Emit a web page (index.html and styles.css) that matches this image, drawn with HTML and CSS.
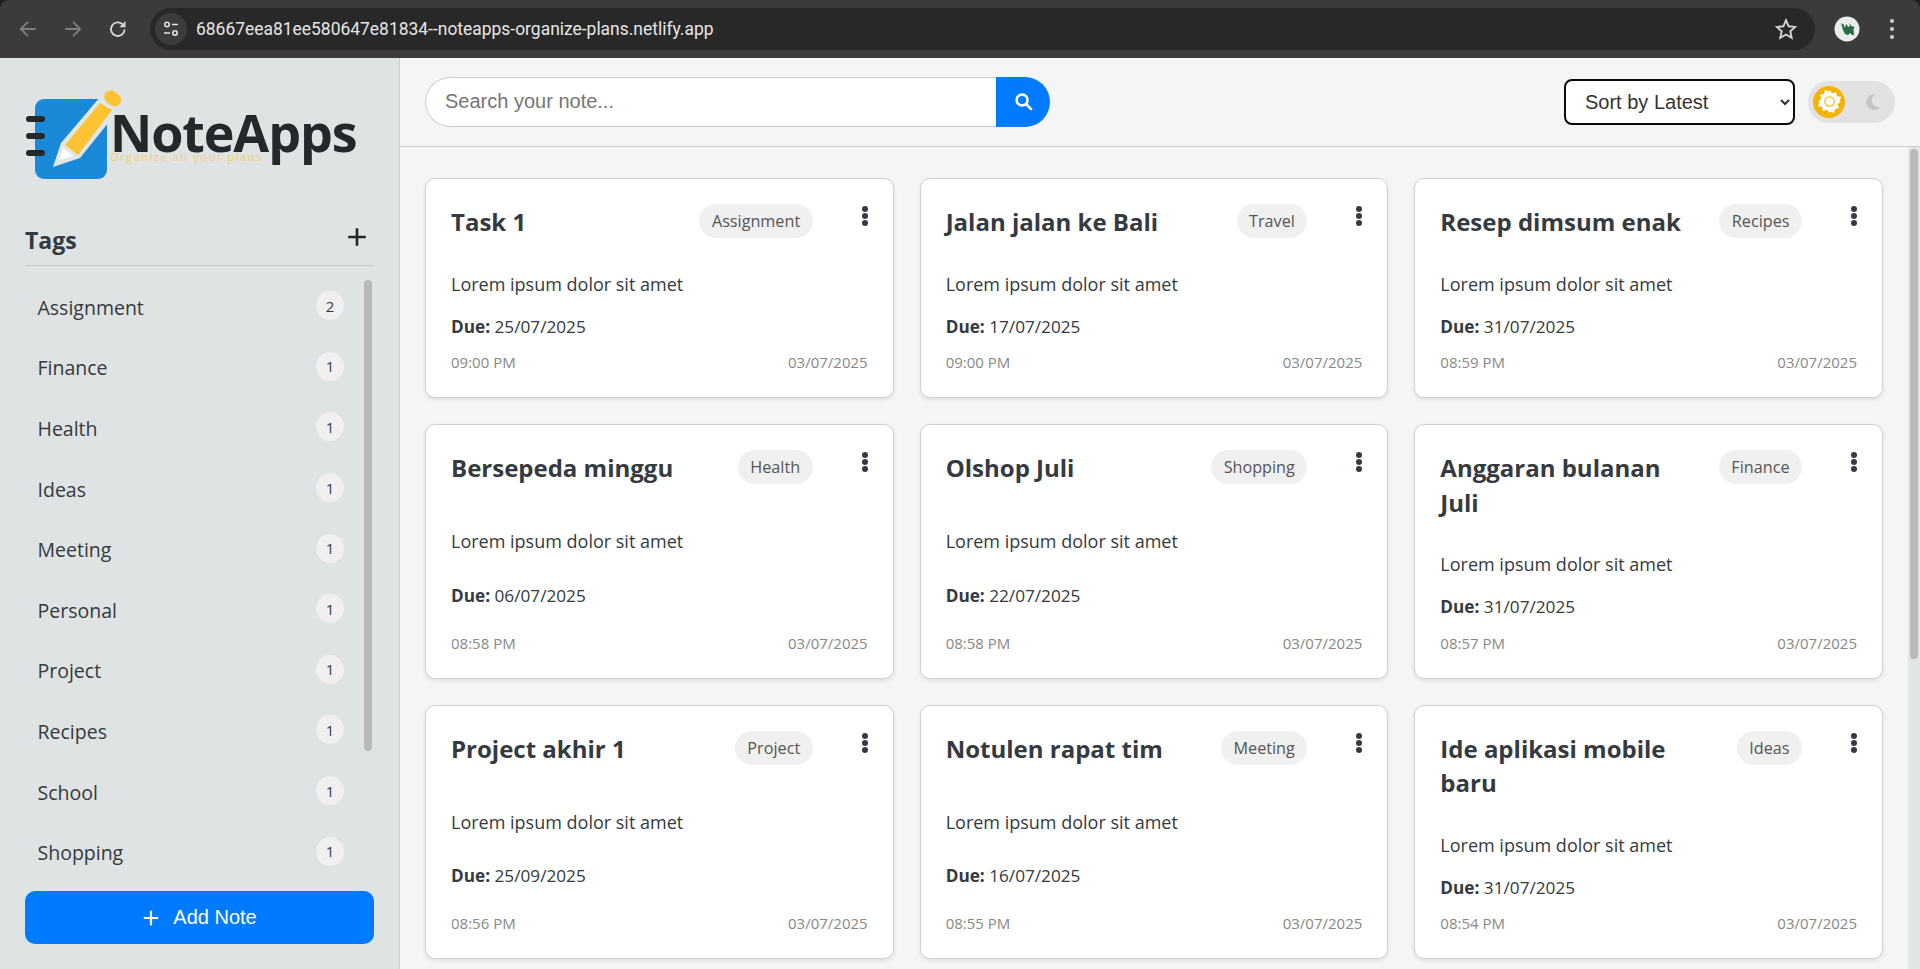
FILE: index.html
```html
<!DOCTYPE html>
<html lang="en">
<head>
<meta charset="utf-8">
<title>NoteApps</title>
<link rel="stylesheet" href="styles.css">
</head>
<body>
<header class="browser">
  <div class="nav-icons">
    <svg class="nav-icon dim" viewBox="0 0 20 20"><path d="M17 10H4M10 3.5 3.5 10l6.5 6.5"/></svg>
    <svg class="nav-icon dim" viewBox="0 0 20 20"><path d="M3 10h13M10 3.5l6.5 6.5-6.5 6.5"/></svg>
    <svg class="nav-icon" viewBox="0 0 20 20"><path d="M16 10.5a6.2 6.2 0 1 1-1.8-4.7L16 7.5"/><path class="solid" d="M16.8 2.8v5.6h-5.6z"/></svg>
  </div>
  <div class="omnibox">
    <span class="site-chip">
      <svg viewBox="0 0 20 20"><circle cx="6" cy="5.5" r="2.2"/><path d="M11 5.5h6M3 14h6"/><circle cx="14" cy="14" r="2.2"/></svg>
    </span>
    <span class="url">68667eea81ee580647e81834--noteapps-organize-plans.netlify.app</span>
    <svg class="star" viewBox="0 0 20 20"><path d="m10 2 2.4 5.5 6 .6-4.5 4 1.3 5.9-5.2-3-5.2 3 1.3-5.9-4.5-4 6-.6z"/></svg>
  </div>
  <div class="avatar">
    <svg viewBox="0 0 26 26"><circle cx="13" cy="13" r="12.5" fill="#e9eeea"/><path d="M7 7l3 2 .5 3 2-4 1.5 3 2-1-.5-3 2 3 3 1-1 3 .5 5h-2l-2-2-2 2-3-1-2-4z" fill="#2a6b44"/></svg>
  </div>
  <div class="kebab"><i></i><i></i><i></i></div>
</header>

<div class="app">
  <aside class="sidebar">
    <svg class="logo" viewBox="0 0 349 110">
      <rect x="10" y="20" width="72" height="80" rx="9" fill="#1a8ad8"/>
      <path d="M4 40h13M4 57h13M4 74h13" stroke="#24282b" stroke-width="6" stroke-linecap="round"/>
      <path d="M28 88l8-24 39-46 17 15-37 46z" fill="#e3e6e6"/>
      <path d="M34 81l4-12 10 8z" fill="#fff"/>
      <path d="M40 66l13 10 34-45-12-7z" fill="#fec233"/>
      <rect x="79" y="13" width="18" height="13" rx="6.5" fill="#fec233" transform="rotate(38.5 88 19)"/>
      <text class="logo-name" x="85" y="73">NoteApps</text>
      <text class="logo-tag" x="85" y="82">Organize all your plans</text>
    </svg>

    <div class="tags-head">
      <h2>Tags</h2>
      <svg class="plus" viewBox="0 0 20 20"><path d="M10 2v16M2 10h16"/></svg>
    </div>

    <div class="tag-pane">
      <ul class="tag-list">
        <li class="tag-row"><span>Assignment</span><b>2</b></li>
        <li class="tag-row"><span>Finance</span><b>1</b></li>
        <li class="tag-row"><span>Health</span><b>1</b></li>
        <li class="tag-row"><span>Ideas</span><b>1</b></li>
        <li class="tag-row"><span>Meeting</span><b>1</b></li>
        <li class="tag-row"><span>Personal</span><b>1</b></li>
        <li class="tag-row"><span>Project</span><b>1</b></li>
        <li class="tag-row"><span>Recipes</span><b>1</b></li>
        <li class="tag-row"><span>School</span><b>1</b></li>
        <li class="tag-row"><span>Shopping</span><b>1</b></li>
      </ul>
      <span class="tag-thumb"></span>
    </div>

    <button class="add-note" type="button">
      <svg viewBox="0 0 20 20"><path d="M10 2v16M2 10h16"/></svg>
      Add Note
    </button>
  </aside>

  <main class="content">
    <div class="toolbar">
      <form class="search">
        <input type="text" placeholder="Search your note...">
        <button type="button" aria-label="Search">
          <svg viewBox="0 0 20 20"><circle cx="8.5" cy="8.5" r="5.7"/><path d="m13 13 5 5"/></svg>
        </button>
      </form>
      <div class="toolbar-right">
        <select class="sort"><option>Sort by Latest</option><option>Sort by Oldest</option></select>
        <div class="theme-toggle">
          <span class="knob">
            <svg viewBox="0 0 24 24">
              <path fill="#fff" d="m12 1 2.6 3.2 3.9-1.3.6 4 4 .6-1.3 3.9L23 12l-3.2 2.6 1.3 3.9-4 .6-.6 4-3.9-1.3L12 23l-2.6-3.2-3.9 1.3-.6-4-4-.6 1.3-3.9L1 12l3.2-2.6-1.3-3.9 4-.6.6-4 3.9 1.3z"/>
              <circle cx="12" cy="12" r="5" fill="#f5b301"/>
              <circle cx="12" cy="12" r="4" fill="#fff"/>
            </svg>
          </span>
          <svg class="moon" viewBox="0 0 20 20"><path d="M13 1.5A8.7 8.7 0 1 0 18.5 15 7.2 7.2 0 0 1 13 1.5z"/></svg>
        </div>
      </div>
    </div>

    <div class="notes-pane">
      <section class="notes">
        <article class="card">
          <div class="card-head"><h3>Task 1</h3><span class="chip">Assignment</span><span class="dots"><i></i><i></i><i></i></span></div>
          <p class="body">Lorem ipsum dolor sit amet</p>
          <p class="due"><strong>Due:</strong> 25/07/2025</p>
          <div class="meta"><span>09:00 PM</span><span>03/07/2025</span></div>
        </article>
        <article class="card">
          <div class="card-head"><h3>Jalan jalan ke Bali</h3><span class="chip">Travel</span><span class="dots"><i></i><i></i><i></i></span></div>
          <p class="body">Lorem ipsum dolor sit amet</p>
          <p class="due"><strong>Due:</strong> 17/07/2025</p>
          <div class="meta"><span>09:00 PM</span><span>03/07/2025</span></div>
        </article>
        <article class="card">
          <div class="card-head"><h3>Resep dimsum enak</h3><span class="chip">Recipes</span><span class="dots"><i></i><i></i><i></i></span></div>
          <p class="body">Lorem ipsum dolor sit amet</p>
          <p class="due"><strong>Due:</strong> 31/07/2025</p>
          <div class="meta"><span>08:59 PM</span><span>03/07/2025</span></div>
        </article>
        <article class="card">
          <div class="card-head"><h3>Bersepeda minggu</h3><span class="chip">Health</span><span class="dots"><i></i><i></i><i></i></span></div>
          <p class="body">Lorem ipsum dolor sit amet</p>
          <p class="due"><strong>Due:</strong> 06/07/2025</p>
          <div class="meta"><span>08:58 PM</span><span>03/07/2025</span></div>
        </article>
        <article class="card">
          <div class="card-head"><h3>Olshop Juli</h3><span class="chip">Shopping</span><span class="dots"><i></i><i></i><i></i></span></div>
          <p class="body">Lorem ipsum dolor sit amet</p>
          <p class="due"><strong>Due:</strong> 22/07/2025</p>
          <div class="meta"><span>08:58 PM</span><span>03/07/2025</span></div>
        </article>
        <article class="card">
          <div class="card-head"><h3>Anggaran bulanan Juli</h3><span class="chip">Finance</span><span class="dots"><i></i><i></i><i></i></span></div>
          <p class="body">Lorem ipsum dolor sit amet</p>
          <p class="due"><strong>Due:</strong> 31/07/2025</p>
          <div class="meta"><span>08:57 PM</span><span>03/07/2025</span></div>
        </article>
        <article class="card">
          <div class="card-head"><h3>Project akhir 1</h3><span class="chip">Project</span><span class="dots"><i></i><i></i><i></i></span></div>
          <p class="body">Lorem ipsum dolor sit amet</p>
          <p class="due"><strong>Due:</strong> 25/09/2025</p>
          <div class="meta"><span>08:56 PM</span><span>03/07/2025</span></div>
        </article>
        <article class="card">
          <div class="card-head"><h3>Notulen rapat tim</h3><span class="chip">Meeting</span><span class="dots"><i></i><i></i><i></i></span></div>
          <p class="body">Lorem ipsum dolor sit amet</p>
          <p class="due"><strong>Due:</strong> 16/07/2025</p>
          <div class="meta"><span>08:55 PM</span><span>03/07/2025</span></div>
        </article>
        <article class="card">
          <div class="card-head"><h3>Ide aplikasi mobile baru</h3><span class="chip">Ideas</span><span class="dots"><i></i><i></i><i></i></span></div>
          <p class="body">Lorem ipsum dolor sit amet</p>
          <p class="due"><strong>Due:</strong> 31/07/2025</p>
          <div class="meta"><span>08:54 PM</span><span>03/07/2025</span></div>
        </article>
      </section>
      <span class="notes-track"><span class="notes-thumb"></span></span>
    </div>
  </main>
</div>
</body>
</html>
```
FILE: styles.css
```css
* { box-sizing: border-box; }
html { height: 100%; overflow: hidden; }
body {
  margin: 0;
  height: 969px;
  overflow: hidden;
  display: flex;
  flex-direction: column;
  font-family: "Open Sans", "Noto Sans", sans-serif;
  color: #343a40;
  background: #202020;
}

/* browser frame */
.browser {
  flex: 0 0 58px;
  height: 58px;
  display: flex;
  align-items: center;
  background: #3b3b3b;
  border-radius: 9px 9px 0 0;
  padding: 0 0 0 15px;
}
.nav-icons { display: flex; gap: 23px; width: 135px; flex: none; padding-left: 2px; }
.nav-icon { width: 22px; height: 22px; fill: none; stroke: #d5d5d5; stroke-width: 1.7; }
.nav-icon.dim { stroke: #7d7d7d; }
.nav-icon .solid { fill: #d5d5d5; stroke: none; }
.omnibox {
  width: 1665px;
  flex: none;
  height: 42px;
  border-radius: 21px;
  background: #282828;
  display: flex;
  align-items: center;
  padding: 0 18px 0 5px;
}
.site-chip {
  width: 32px;
  height: 32px;
  border-radius: 50%;
  background: #3c3c3c;
  display: flex;
  align-items: center;
  justify-content: center;
  flex: none;
}
.site-chip svg { width: 20px; height: 20px; fill: none; stroke: #e3e3e3; stroke-width: 1.6; }
.url {
  margin-left: 9px;
  flex: 1;
  font-family: "Roboto", sans-serif;
  font-size: 17.45px;
  color: #e6e6e6;
}
.star { width: 22px; height: 22px; fill: none; stroke: #d5d5d5; stroke-width: 1.7; }
.avatar { margin-left: 19px; width: 26px; height: 26px; flex: none; }
.avatar svg { display: block; width: 26px; height: 26px; }
.kebab { margin-left: 30px; display: flex; flex-direction: column; gap: 4px; }
.kebab i { width: 4px; height: 4px; border-radius: 50%; background: #d5d5d5; }

.app { flex: 1; min-height: 0; display: flex; }

/* sidebar */
.sidebar {
  flex: 0 0 400px;
  width: 400px;
  background: #dfe3e3;
  border-right: 1px solid #c9cccc;
  padding: 0 25px 25px;
  display: flex;
  flex-direction: column;
}
.logo { width: 349px; height: 110px; flex: none; margin-top: 21px; display: block; overflow: visible; }
.logo-name { font-family: "Open Sans", sans-serif; font-weight: 700; font-size: 52px; letter-spacing: -1.1px; fill: #23282b; }
.logo-tag { font-family: "Open Sans", sans-serif; font-size: 11px; letter-spacing: 1.55px; fill: #f6cf72; }
.tags-head {
  margin-top: 31px;
  height: 46px;
  display: flex;
  align-items: center;
  justify-content: space-between;
  border-bottom: 1px solid #c6caca;
  padding-bottom: 5px;
  flex: none;
}
.tags-head h2 { margin: 0; font-size: 23px; font-weight: 700; color: #343a40; }
.plus { width: 22px; height: 22px; fill: none; stroke: #23282b; stroke-width: 2.4; margin-right: 6px; margin-top: -6px; }
.tag-pane {
  position: relative;
  flex: 1;
  min-height: 0;
  margin-top: 11px;
  overflow: hidden;
}
.tag-list { list-style: none; margin: 0; padding: 0; }
.tag-thumb {
  position: absolute;
  top: 3px;
  right: 2px;
  width: 8px;
  height: 471px;
  border-radius: 4px;
  background: #b9b9b9;
}
.tag-row {
  height: 60.6px;
  display: flex;
  align-items: center;
  justify-content: space-between;
  padding: 0 30px 0 12.5px;
  font-size: 19.5px;
  font-weight: 500;
}
.tag-row b {
  width: 28px;
  height: 29px;
  border-radius: 50%;
  background: #f0f0f0;
  font-size: 15px;
  font-weight: 400;
  display: flex;
  align-items: center;
  justify-content: center;
  margin-top: -3px;
}
.add-note {
  flex: none;
  margin-top: 23px;
  height: 53px;
  border: 0;
  border-radius: 10px;
  background: #007bff;
  color: #fff;
  font-family: "Liberation Sans", Arial, sans-serif;
  font-size: 20px;
  display: flex;
  align-items: center;
  justify-content: center;
  gap: 13px;
}
.add-note svg { width: 18px; height: 18px; fill: none; stroke: #fff; stroke-width: 2.4; }

/* main */
.content { flex: 1; min-width: 0; display: flex; flex-direction: column; background: #f4f6f6; }
.toolbar {
  flex: 0 0 89px;
  display: flex;
  align-items: center;
  justify-content: space-between;
  padding: 0 25px 1px;
  border-bottom: 1px solid #ccd0d0;
}
.search { display: flex; width: 625px; height: 50px; }
.search input {
  flex: 1;
  min-width: 0;
  border: 1px solid #ccc;
  border-right: 0;
  border-radius: 25px 0 0 25px;
  padding: 0 19px;
  background: #fff;
  font-family: "Liberation Sans", Arial, sans-serif;
  font-size: 20px;
  color: #333;
  outline: none;
}
.search input::placeholder { color: #757575; }
.search button {
  width: 54px;
  border: 0;
  background: #007bff;
  border-radius: 0 25px 25px 0;
  display: flex;
  align-items: center;
  justify-content: center;
}
.search svg { width: 19px; height: 19px; fill: none; stroke: #fff; stroke-width: 2.8; stroke-linecap: round; }
.toolbar-right { display: flex; align-items: center; gap: 13px; }
.sort {
  width: 231px;
  height: 46px;
  border: 2px solid #0a0a0a;
  border-radius: 8px;
  background: #fff;
  padding: 0 15px;
  font-family: "Liberation Sans", Arial, sans-serif;
  font-size: 20px;
  color: #333;
}
.theme-toggle {
  width: 87px;
  height: 42px;
  border-radius: 21px;
  background: #e2e2e2;
  display: flex;
  align-items: center;
  justify-content: space-between;
  padding: 0 13px 0 5px;
}
.knob { width: 32px; height: 32px; border-radius: 50%; background: #f5b301; display: flex; align-items: center; justify-content: center; }
.knob svg { width: 25px; height: 25px; }
.moon { width: 18px; height: 18px; fill: #c4c4c4; }

.notes-pane { position: relative; flex: 1; min-height: 0; padding: 31px 37px 0 25px; }
.notes-track {
  position: absolute;
  top: 0;
  right: 0;
  bottom: 0;
  width: 12px;
  background: #e2e5e5;
  padding: 2px 2px 0;
}
.notes-thumb {
  display: block;
  height: 510px;
  border-radius: 4px;
  background: #b9b9b9;
}
.notes { display: grid; grid-template-columns: repeat(3, 1fr); gap: 26px; }
.card {
  background: #fff;
  border: 1px solid #cfd2d2;
  border-radius: 10px;
  box-shadow: 0 2px 4px rgba(0,0,0,.09);
  padding: 26px 25px 25px;
  display: flex;
  flex-direction: column;
  justify-content: space-between;
}
.card-head { display: flex; align-items: flex-start; }
.card-head h3 { flex: 1; min-width: 0; margin: 0; font-size: 24px; line-height: 34.5px; font-weight: 700; color: #343a40; padding-right: 24px; }
.chip {
  flex: none;
  height: 34px;
  margin-top: -1px;
  padding: 0 12.5px;
  border-radius: 17px;
  background: #f0f0f0;
  color: #555;
  font-size: 16.2px;
  line-height: 34px;
}
.dots { flex: none; width: 12px; margin: 1px -3px 0 46px; display: flex; flex-direction: column; align-items: center; gap: 1px; }
.dots i { width: 6px; height: 6px; border-radius: 50%; background: #343a40; }
.body { margin: 32px 0 0; font-size: 18px; line-height: 24px; }
.due { margin: 19px 0 0; font-size: 17.2px; line-height: 24px; }
.due strong { font-weight: 700; }
.meta { margin-top: 13.5px; display: flex; justify-content: space-between; font-size: 15px; line-height: 20px; color: #888; }
```
